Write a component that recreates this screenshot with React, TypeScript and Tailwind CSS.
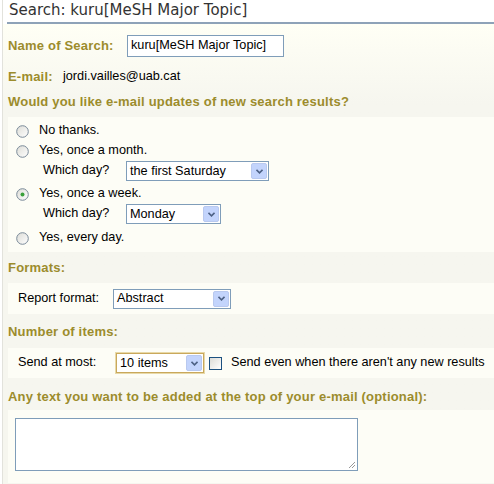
import * as React from "react";

const label = "whitespace-nowrap font-bold text-[13px] text-[#9c8c2c] tracking-[0.2px]";

function Radio({ checked = false }: { checked?: boolean }) {
  const id = checked ? "rg1" : "rg0";
  return (
    <svg width="13" height="13" viewBox="0 0 13 13" className="shrink-0">
      <defs>
        <linearGradient id={id} x1="0" y1="0" x2="1" y2="1">
          <stop offset="0" stopColor="#dcdcd6" />
          <stop offset="1" stopColor="#ffffff" />
        </linearGradient>
      </defs>
      <circle cx="6.5" cy="6.5" r="5.8" fill={`url(#${id})`} stroke="#7a8a99" strokeWidth="1" />
      {checked && <circle cx="6.5" cy="6.5" r="2" fill="#3aa03a" />}
    </svg>
  );
}

function Select({ value, width, gold = false }: { value: string; width: number; gold?: boolean }) {
  return (
    <div
      className={`flex h-[20px] items-center border bg-white ${gold ? "border-[#c9a85c] outline outline-1 outline-[#e8d9a8]" : "border-[#7f9db9]"}`}
      style={{ width }}
    >
      <span className="flex-1 whitespace-nowrap pl-[3px] leading-none text-black">{value}</span>
      <span className="mr-[1px] flex h-[16px] w-[16px] items-center justify-center rounded-[2px] border border-[#b9c9ef] bg-[#c3d4fc]">
        <svg width="7" height="5" viewBox="0 0 7 5">
          <path d="M0.5 0.8 L3.5 3.8 L6.5 0.8" fill="none" stroke="#4d6185" strokeWidth="1.6" />
        </svg>
      </span>
    </div>
  );
}

export default function App() {
  return (
    <div className="h-[484px] w-[494px] overflow-hidden bg-white font-['Liberation_Sans',Arial,sans-serif] text-[12.7px] text-black">
      <div className="ml-[2px] h-full border-l border-[#e2e2dc]">
        <div className="h-[22px] whitespace-nowrap pl-[6px] pt-[1px] font-['DejaVu_Sans',Verdana,sans-serif] text-[15px] leading-[18px] text-[#333]">
          Search: kuru[MeSH Major Topic]
        </div>
        <div className="ml-[4px] h-[2px] bg-[#8ea2b8]" />
        <div className="h-full bg-gradient-to-b from-[#fffff5] to-[#f6f6ef] to-[80px]">
          <div className="flex h-[44px] items-center pl-[5px]">
            <span className={`${label} w-[119px]`}>Name of Search:</span>
            <div className="flex h-[22px] w-[157px] items-center whitespace-nowrap border border-[#7f9db9] bg-white pl-[3px]">
              kuru[MeSH Major Topic]
            </div>
          </div>
          <div className="flex h-[18px] items-center pl-[5px]">
            <span className={`${label} w-[55px]`}>E-mail:</span>
            <span>jordi.vailles@uab.cat</span>
          </div>
          <div className="flex h-[31px] items-center pl-[5px]">
            <span className={label}>Would you like e-mail updates of new search results?</span>
          </div>
          <div className="ml-[5px] flex flex-col bg-[#fdfdf6] pb-[4px] pl-[8px] pt-[4px]">
            <div className="flex h-[20px] items-center gap-[10px]">
              <Radio />
              <span>No thanks.</span>
            </div>
            <div className="flex h-[20px] items-center gap-[10px]">
              <Radio />
              <span>Yes, once a month.</span>
            </div>
            <div className="flex h-[20px] items-center pl-[27px]">
              <span className="w-[83px]">Which day?</span>
              <Select value="the first Saturday" width={143} />
            </div>
            <div className="flex h-[23px] items-center gap-[10px] pt-[3px]">
              <Radio checked />
              <span>Yes, once a week.</span>
            </div>
            <div className="flex h-[20px] items-center pl-[27px]">
              <span className="w-[83px]">Which day?</span>
              <Select value="Monday" width={95} />
            </div>
            <div className="flex h-[24px] items-center gap-[10px] pt-[4px]">
              <Radio />
              <span>Yes, every day.</span>
            </div>
          </div>
          <div className="flex h-[31px] items-center pl-[5px] pt-[1px]">
            <span className={label}>Formats:</span>
          </div>
          <div className="ml-[5px] flex h-[31px] items-center bg-[#fdfdf6] pl-[10px]">
            <span className="w-[95px]">Report format:</span>
            <Select value="Abstract" width={118} />
          </div>
          <div className="flex h-[34px] items-center pl-[5px] pt-[2px]">
            <span className={label}>Number of items:</span>
          </div>
          <div className="ml-[5px] flex h-[30px] items-center bg-[#fdfdf6] pl-[10px]">
            <span className="w-[98px]">Send at most:</span>
            <Select value="10 items" width={88} gold />
            <span className="ml-[5px] h-[13px] w-[13px] border border-[#1c5180] bg-gradient-to-br from-[#dcdcd7] to-white" />
            <span className="ml-[9px] whitespace-nowrap">Send even when there aren't any new results</span>
          </div>
          <div className="flex h-[32px] items-center pl-[5px] pt-[6px]">
            <span className={label}>Any text you want to be added at the top of your e-mail (optional):</span>
          </div>
          <div className="ml-[5px] bg-[#fdfdf6] pb-[12px] pl-[7px] pt-[8px]">
            <div className="relative h-[53px] w-[343px] border border-[#7f9db9] bg-white">
              <svg width="9" height="9" viewBox="0 0 9 9" className="absolute bottom-[1px] right-[1px]">
                <path d="M8 2 L2 8 M8 5 L5 8" stroke="#999" strokeWidth="1" />
              </svg>
            </div>
          </div>
        </div>
      </div>
    </div>
  );
}
